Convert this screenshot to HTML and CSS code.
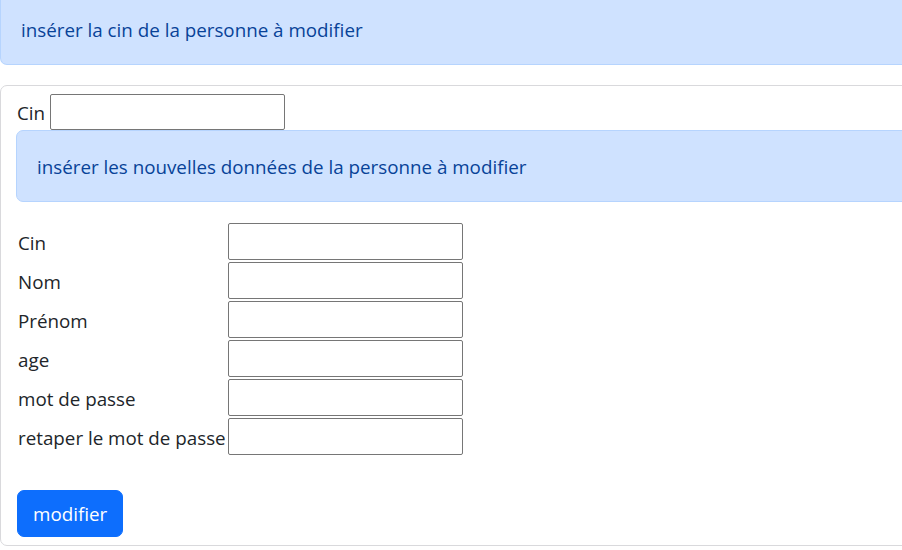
FILE: index.html
```html
<!DOCTYPE html>
<html lang="fr">
<head>
<meta charset="utf-8">
<title>Modifier personne</title>
<link rel="stylesheet" href="styles.css">
</head>
<body>
<div class="page">
  <div class="alert alert-top">insérer la cin de la personne à modifier</div>
  <form class="card">
    <div class="search-row">
      <label class="lbl" for="cin0">Cin</label>
      <input class="field" id="cin0" type="text">
    </div>
    <div class="alert alert-inner">insérer les nouvelles données de la personne à modifier</div>
    <div class="grid">
      <label class="cell-label" for="f1">Cin</label><input class="field" id="f1" type="text">
      <label class="cell-label" for="f2">Nom</label><input class="field" id="f2" type="text">
      <label class="cell-label" for="f3">Prénom</label><input class="field" id="f3" type="text">
      <label class="cell-label" for="f4">age</label><input class="field" id="f4" type="text">
      <label class="cell-label" for="f5">mot de passe</label><input class="field" id="f5" type="password">
      <label class="cell-label" for="f6">retaper le mot de passe</label><input class="field" id="f6" type="password">
    </div>
    <div class="actions">
      <button class="btn" type="button">modifier</button>
    </div>
  </form>
</div>
</body>
</html>
```

FILE: styles.css
```css
html, body {
  margin: 0;
  padding: 0;
  overflow: hidden;
  background: #ffffff;
}

body {
  font-family: "Open Sans", "Noto Sans", sans-serif;
  font-size: 18.8px;
  line-height: 30px;
  color: #212529;
}

.page {
  width: 1000px;
}

.alert {
  background: #cfe2ff;
  border: 1px solid #b6d4fe;
  color: #084298;
  padding: 21px 20px 19px;
  border-radius: 7px;
}

.alert-top {
  border-top: 0;
  border-radius: 0 0 7px 7px;
  padding-top: 15px;
  margin-bottom: 20px;
}

.card {
  display: block;
  margin: 0;
  border: 1px solid #d9d9dc;
  border-radius: 7px;
  padding: 8px 15px;
}

.search-row {
  display: flex;
  align-items: center;
  gap: 5px;
  padding-left: 1px;
}

.lbl {
  padding-top: 1px;
}

.field {
  box-sizing: border-box;
  width: 235px;
  height: 36px;
  border: 1px solid #767676;
  border-radius: 2px;
  background: #fff;
  padding: 0 3px;
  margin: 0;
  font: inherit;
}

.alert-inner {
  margin-bottom: 21px;
}

.grid {
  display: grid;
  grid-template-columns: 210px 235px;
  row-gap: 2px;
  padding-left: 2px;
  align-items: center;
}

.grid .field {
  height: 37px;
}

.cell-label {
  white-space: nowrap;
  padding-top: 2px;
}

.actions {
  margin-top: 35px;
  padding-left: 1px;
}

.btn {
  font: inherit;
  line-height: 30px;
  color: #ffffff;
  background: #0d6efd;
  border: 1px solid #0d6efd;
  border-radius: 7px;
  padding: 8px 15px 7px;
  margin: 0;
  display: block;
}
```
